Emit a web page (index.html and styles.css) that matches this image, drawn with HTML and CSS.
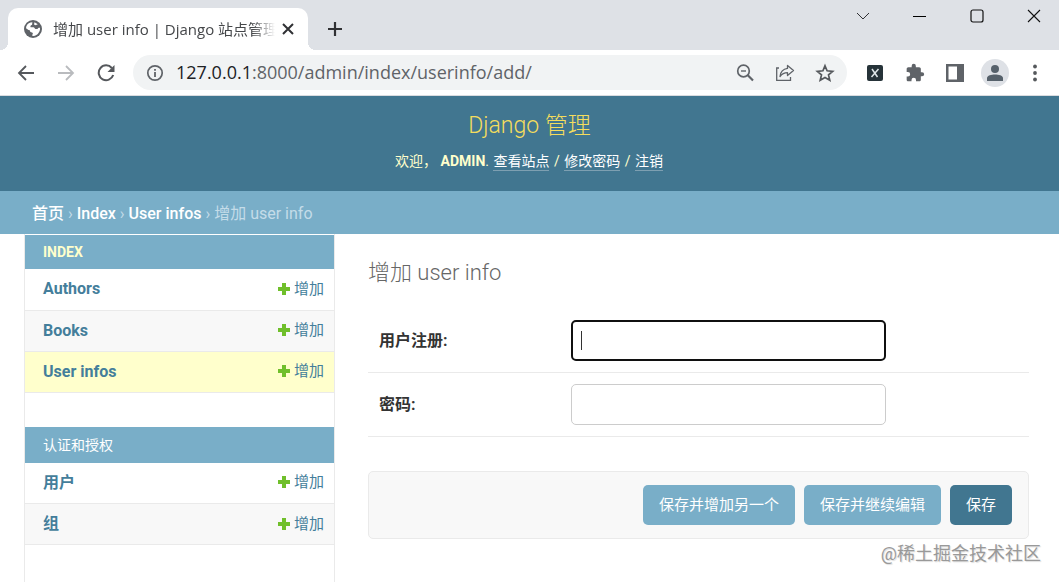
FILE: index.html
```html
<!DOCTYPE html>
<html lang="zh-hans">

<head>
  <meta charset="UTF-8" />
  <meta name="viewport" content="width=device-width, initial-scale=1.0" />
  <title>增加 user info | Django 站点管理员</title>
  <link rel="stylesheet" href="styles.css">
</head>

<body>
  <div class="browser">
    <div class="tab_strip">
      <div class="tab">
        <svg class="tab_icon" width="20" height="20" viewBox="0 0 20 20">
          <circle cx="10" cy="10" r="9" fill="#5f6368" />
          <path d="M3 9.2C3 6.500 5 4 7.500 3.400L9.500 3.200C8.800 4.300 9.800 5 8.800 6C7.600 6.200 7.300 7.200 7.500 8.300H10.500C11.500 8.600 11.600 9.600 12.400 10H14.500C15 8.800 16 8.400 17 8.800C17.500 12.500 14.700 16.600 10.500 17L9.200 16.700C9.200 15.500 10 15 9.800 14C8.800 13 7.500 13.600 7 12.300C7 11.300 6.500 11 5.500 11L3 9.200Z" fill="#fff" />
          <path d="M11.500 3.300L11 5.500L12.500 6.200L14.800 5.200Z" fill="#fff" />
        </svg>
        <span class="tab_title">增加 user info | Django 站点管理</span>
        <button class="icon_btn tab_close" aria-label="关闭标签页">
          <svg width="12" height="12" viewBox="0 0 12 12"><path d="M1 1L11 11M11 1L1 11" stroke="#303134" stroke-width="2" fill="none" /></svg>
        </button>
      </div>
      <button class="icon_btn new_tab" aria-label="新标签页">
        <svg width="16" height="16" viewBox="0 0 16 16"><path d="M8 1V15M1 8H15" stroke="#303134" stroke-width="2.200" fill="none" /></svg>
      </button>
      <div class="window_btns">
        <button class="icon_btn" aria-label="搜索标签页">
          <svg width="14" height="14" viewBox="0 0 14 14"><path d="M1 4L7 10L13 4" stroke="#303134" fill="none" /></svg>
        </button>
        <button class="icon_btn" aria-label="最小化">
          <svg width="14" height="14" viewBox="0 0 14 14"><path d="M0 7.500H13" stroke="#000" fill="none" /></svg>
        </button>
        <button class="icon_btn" aria-label="最大化">
          <svg width="14" height="14" viewBox="0 0 14 14"><rect x="1" y="1" width="12" height="12" rx="2" stroke="#111" stroke-width="1.200" fill="none" /></svg>
        </button>
        <button class="icon_btn" aria-label="关闭">
          <svg width="14" height="14" viewBox="0 0 14 14"><path d="M1 1L13 13M13 1L1 13" stroke="#111" stroke-width="1.100" fill="none" /></svg>
        </button>
      </div>
    </div>

    <div class="toolbar">
      <div class="nav_btns">
        <button class="icon_btn" aria-label="后退">
          <svg width="18" height="18" viewBox="0 0 18 18"><path d="M17 9H2M9 2L2 9L9 16" stroke="#55585c" stroke-width="1.800" fill="none" /></svg>
        </button>
        <button class="icon_btn" aria-label="前进">
          <svg width="18" height="18" viewBox="0 0 18 18"><path d="M1 9H16M9 2L16 9L9 16" stroke="#b9bbbe" stroke-width="1.800" fill="none" /></svg>
        </button>
        <button class="icon_btn" aria-label="重新加载">
          <svg width="18" height="18" viewBox="0 0 18 18">
            <path d="M14.800 4A7.400 7.400 0 1 0 16.200 11" stroke="#55585c" stroke-width="2" fill="none" />
            <path d="M17.500 1V8H10.500Z" fill="#55585c" />
          </svg>
        </button>
      </div>
      <div class="address_bar">
        <svg width="18" height="18" viewBox="0 0 18 18">
          <circle cx="9" cy="9" r="7.200" stroke="#5f6368" stroke-width="1.700" fill="none" />
          <path d="M9 8V13M9 5V6.800" stroke="#5f6368" stroke-width="1.800" />
        </svg>
        <span class="url"><span class="url_host">127.0.0.1</span>:8000/admin/index/userinfo/add/</span>
        <button class="icon_btn" aria-label="缩放">
          <svg width="20" height="20" viewBox="0 0 20 20">
            <circle cx="8.500" cy="8" r="5.800" stroke="#5f6368" stroke-width="1.700" fill="none" />
            <path d="M12.800 12.300L18 17.500" stroke="#5f6368" stroke-width="2.200" />
            <path d="M6 8H11" stroke="#5f6368" stroke-width="1.400" />
          </svg>
        </button>
        <button class="icon_btn" aria-label="分享此页">
          <svg width="20" height="20" viewBox="0 0 20 20">
            <path d="M4 5H1.700V17.300H15.500V14" stroke="#5f6368" stroke-width="1.300" fill="none" />
            <path d="M12.500 2.500L18.500 7.500L12.500 12.500V9.700C9 9.700 7 10.800 5 13.500C5.500 9 8 6 12.500 5.400Z" stroke="#5f6368" stroke-width="1.300" fill="none" stroke-linejoin="round" />
          </svg>
        </button>
        <button class="icon_btn" aria-label="添加书签">
          <svg width="20" height="20" viewBox="0 0 20 20"><path d="M10 2.800L12.100 7.800L17.700 8.300L13.500 11.900L14.800 17.200L10 14.400L5.200 17.200L6.500 11.900L2.300 8.300L7.900 7.800Z" stroke="#55585c" stroke-width="1.700" fill="none" /></svg>
        </button>
      </div>
      <div class="tool_btns">
        <button class="icon_btn" aria-label="XPath 扩展">
          <svg width="20" height="20" viewBox="0 0 20 20">
            <rect x="2" y="2" width="16" height="16" rx="2" fill="#263339" />
            <path d="M7 6L12.500 14M13.500 6L6.500 14" stroke="#dfe6e8" stroke-width="1.500" />
          </svg>
        </button>
        <button class="icon_btn" aria-label="扩展程序">
          <svg width="20" height="20" viewBox="0 0 24 24"><path fill="#5f6368" d="M20.500 11H19V7c0-1.100-.9-2-2-2h-4V3.500a2.500 2.500 0 0 0-5 0V5H4c-1.100 0-2 .9-2 2v3.800h1.500a2.700 2.700 0 0 1 0 5.400H2V20c0 1.100.9 2 2 2h3.800v-1.500a2.700 2.700 0 0 1 5.400 0V22H17c1.100 0 2-.9 2-2v-4h1.500a2.500 2.500 0 0 0 0-5z" /></svg>
        </button>
        <button class="icon_btn" aria-label="侧边栏">
          <svg width="20" height="20" viewBox="0 0 20 20"><path d="M1 1H19V19H1ZM3.500 3.500V16.500H12V3.500Z" fill="#5f6368" fill-rule="evenodd" /></svg>
        </button>
        <button class="icon_btn avatar" aria-label="用户账号">
          <svg width="18" height="18" viewBox="0 0 18 18">
            <circle cx="9" cy="5" r="4" fill="#56616b" />
            <path d="M1 17V14C1 11.500 5.500 10.500 9 10.500S17 11.500 17 14V17Z" fill="#56616b" />
          </svg>
        </button>
        <button class="icon_btn" aria-label="更多">
          <svg width="20" height="20" viewBox="0 0 20 20" fill="#55585c"><circle cx="10" cy="3.500" r="1.900" /><circle cx="10" cy="10" r="1.900" /><circle cx="10" cy="16.500" r="1.900" /></svg>
        </button>
      </div>
    </div>
  </div>

  <header class="header">
    <h1 class="site_name"><a href="#">Django 管理</a></h1>
    <div class="user_tools">
      欢迎， <strong>ADMIN</strong>.
      <a href="#">查看站点</a> / <a href="#">修改密码</a> / <a href="#">注销</a>
    </div>
  </header>

  <nav class="breadcrumbs">
    <a href="#">首页</a> › <a href="#">Index</a> › <a href="#">User infos</a> › 增加 user info
  </nav>

  <div class="main">
    <nav class="sidebar">
      <table class="module">
        <caption><a href="#">INDEX</a></caption>
        <tr>
          <th scope="row"><a href="#">Authors</a></th>
          <td><a href="#" class="addlink">增加</a></td>
        </tr>
        <tr>
          <th scope="row"><a href="#">Books</a></th>
          <td><a href="#" class="addlink">增加</a></td>
        </tr>
        <tr class="current">
          <th scope="row"><a href="#">User infos</a></th>
          <td><a href="#" class="addlink">增加</a></td>
        </tr>
      </table>

      <table class="module">
        <caption class="caption_cn"><a href="#">认证和授权</a></caption>
        <tr>
          <th scope="row"><a href="#">用户</a></th>
          <td><a href="#" class="addlink">增加</a></td>
        </tr>
        <tr>
          <th scope="row"><a href="#">组</a></th>
          <td><a href="#" class="addlink">增加</a></td>
        </tr>
      </table>
    </nav>

    <main class="content">
      <h2>增加 user info</h2>
      <form>
        <div class="form_row">
          <label for="id_user">用户注册:</label>
          <input type="text" class="text_field" id="id_user" name="user" maxlength="32" autofocus />
        </div>
        <div class="form_row">
          <label for="id_pwd">密码:</label>
          <input type="text" class="text_field" id="id_pwd" name="pwd" maxlength="32" />
        </div>
        <div class="submit_row">
          <button type="submit" name="_addanother">保存并增加另一个</button>
          <button type="submit" name="_continue">保存并继续编辑</button>
          <button type="submit" class="default" name="_save">保存</button>
        </div>
      </form>
    </main>
  </div>

  <div class="watermark">@稀土掘金技术社区</div>
</body>

</html>
```

FILE: styles.css
```css
* {
  box-sizing: border-box;
}

body {
  display: flex;
  flex-direction: column;
  margin: 0;
  min-height: 100vh;
  position: relative;
  font-family: Roboto, 'Noto Sans CJK SC', sans-serif;
  font-size: 16px;
  color: #333;
  background: #fff;
}

a {
  color: #447e9b;
  text-decoration: none;
}

/* Browser window */

.browser {
  font-family: 'Open Sans', 'Noto Sans CJK SC', sans-serif;
  border-bottom: 1px solid #dadce0;
}

.icon_btn {
  display: flex;
  align-items: center;
  justify-content: center;
  padding: 0;
  border: 0;
  background: transparent;
}

.tab_strip {
  display: flex;
  height: 50px;
  padding: 8px 0 0 8px;
  background: #dee1e6;
}

.tab {
  position: relative;
  display: flex;
  align-items: center;
  width: 300px;
  padding: 0 14px 0 15px;
  border-radius: 10px 10px 0 0;
  background: #fff;
}

.tab::before,
.tab::after {
  content: '';
  position: absolute;
  bottom: 0;
  width: 8px;
  height: 8px;
}

.tab::before {
  right: 100%;
  background: radial-gradient(circle at 0 0, #dee1e6 8px, #fff 8px);
}

.tab::after {
  left: 100%;
  background: radial-gradient(circle at 100% 0, #dee1e6 8px, #fff 8px);
}

.tab_icon {
  flex: none;
}

/* Title fades out before the close button */
.tab_title {
  flex: 1;
  margin-left: 10px;
  padding-bottom: 2px;
  white-space: nowrap;
  font-size: 15px;
  color: #45474a;
  -webkit-mask-image: linear-gradient(to right, #000 200px, transparent 222px);
  mask-image: linear-gradient(to right, #000 200px, transparent 222px);
}

.new_tab {
  width: 54px;
}

.window_btns {
  display: flex;
  gap: 43px;
  height: 16px;
  margin-left: auto;
  padding-right: 18px;
}

.toolbar {
  display: flex;
  align-items: center;
  height: 45px;
  padding: 0 14px 0 17px;
}

.nav_btns {
  display: flex;
  gap: 22px;
  margin-right: 18px;
}

.address_bar {
  display: flex;
  flex: 1;
  align-items: center;
  gap: 20px;
  height: 35px;
  padding: 0 12px 0 13px;
  border-radius: 18px;
  background: #f1f3f4;
}

.url {
  flex: 1;
  margin-left: -8px;
  padding-bottom: 2px;
  font-size: 18px;
  color: #5f6368;
}

.url_host {
  color: #202124;
}

.tool_btns {
  display: flex;
  align-items: center;
  gap: 20px;
  margin-left: 18px;
}

.avatar {
  width: 28px;
  height: 28px;
  margin: 0 -4px;
  border-radius: 50%;
  background: #dee1e6;
}

/* Admin header */

.header {
  height: 95px;
  padding-top: 14px;
  text-align: center;
  color: #ffc;
  background: #417690;
}

.site_name {
  margin: 0 0 7px;
  font-size: 23px;
  line-height: 32px;
  font-weight: 300;
}

.site_name a {
  color: #f5dd5d;
}

.user_tools {
  font-size: 14px;
  line-height: 24px;
}

.user_tools a {
  margin: 0 1px;
  padding-bottom: 1px;
  color: #fff;
  border-bottom: 1px solid #7d9fb1;
}

.breadcrumbs {
  padding: 11px 32px 8px;
  line-height: 24px;
  color: #c4dce8;
  background: #79aec8;
}

.breadcrumbs a {
  color: #fff;
  font-weight: 500;
}

/* Main area */

.main {
  display: flex;
  flex: 1;
}

.sidebar {
  width: 311px;
  margin-left: 24px;
  padding-top: 1px;
  border: 1px solid #eaeaea;
  border-width: 0 1px;
}

.module {
  width: 100%;
  margin-bottom: 34px;
  border-collapse: collapse;
}

.module caption {
  padding: 5px 18px;
  text-align: left;
  font-size: 14px;
  line-height: 24px;
  font-weight: 700;
  background: #79aec8;
}

.module caption a {
  color: #ffc;
}

.module .caption_cn {
  padding: 6px 18px;
  font-weight: 400;
}

.module .caption_cn a {
  color: #fff;
}

.module th,
.module td {
  height: 41px;
  padding: 0 10px 0 18px;
  border-bottom: 1px solid #eaeaea;
  text-align: left;
  line-height: 24px;
}

.module th {
  font-weight: 700;
}

.module td {
  text-align: right;
  font-size: 15px;
}

.module tr:nth-child(even) {
  background: #f8f8f8;
}

.module .current {
  background: #ffc;
}

.addlink {
  display: inline-flex;
  align-items: center;
  gap: 4px;
}

/* Green plus sign */
.addlink::before {
  content: '';
  width: 12px;
  height: 12px;
  background:
    linear-gradient(#70bf2b, #70bf2b) center / 12px 4px no-repeat,
    linear-gradient(#70bf2b, #70bf2b) center / 4px 12px no-repeat;
}

.content {
  flex: 1;
  padding: 23px 30px 42px 33px;
}

.content h2 {
  margin: 0 0 20px;
  font-size: 22px;
  line-height: 32px;
  font-weight: 300;
  color: #666;
}

.form_row {
  display: flex;
  align-items: center;
  padding: 11px;
  border-bottom: 1px solid #eaeaea;
}

.form_row label {
  width: 192px;
  padding-bottom: 4px;
  font-weight: 700;
}

.text_field {
  width: 315px;
  height: 41px;
  padding: 6px 9px;
  border: 1px solid #ccc;
  border-radius: 5px;
  font-family: inherit;
  font-size: 16px;
  color: #333;
}

/* Steady caret in place of the blinking one */
.text_field:focus {
  outline: 0;
  padding: 5px 8px;
  border: 2px solid #101010;
  caret-color: transparent;
  background: linear-gradient(#333, #333) 8px center / 1px 19px no-repeat;
}

.submit_row {
  display: flex;
  justify-content: flex-end;
  gap: 9px;
  margin-top: 34px;
  padding: 13px 16px;
  border: 1px solid #eaeaea;
  border-radius: 5px;
  background: #f8f8f8;
}

.submit_row button {
  height: 40px;
  padding: 0 16px 3px;
  border: 0;
  border-radius: 5px;
  font-family: inherit;
  font-size: 15px;
  color: #fff;
  background: #79aec8;
}

.submit_row .default {
  background: #417690;
}

.watermark {
  position: absolute;
  right: 18px;
  bottom: 14px;
  font-size: 18px;
  line-height: 28px;
  color: #999;
  text-shadow: 1px 1px 1px #ddd;
}
```
